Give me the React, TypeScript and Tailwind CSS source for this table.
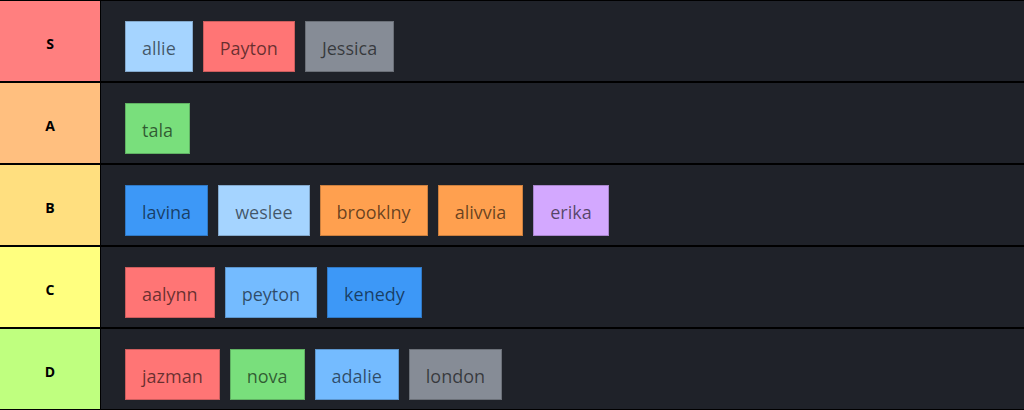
const tiers = [
  {
    label: 'S',
    color: 'bg-[#ff7f7f]',
    items: [
      { name: 'allie', color: 'bg-[#a5d4ff]' },
      { name: 'Payton', color: 'bg-[#ff7575]' },
      { name: 'Jessica', color: 'bg-[#868c96]' },
    ],
  },
  {
    label: 'A',
    color: 'bg-[#ffbf7f]',
    items: [{ name: 'tala', color: 'bg-[#79df7c]' }],
  },
  {
    label: 'B',
    color: 'bg-[#ffdf7f]',
    items: [
      { name: 'lavina', color: 'bg-[#3d98f7]' },
      { name: 'weslee', color: 'bg-[#a5d4ff]' },
      { name: 'brooklny', color: 'bg-[#ffa04f]' },
      { name: 'alivvia', color: 'bg-[#ffa04f]' },
      { name: 'erika', color: 'bg-[#d3a8ff]' },
    ],
  },
  {
    label: 'C',
    color: 'bg-[#ffff7f]',
    items: [
      { name: 'aalynn', color: 'bg-[#ff7575]' },
      { name: 'peyton', color: 'bg-[#74bbff]' },
      { name: 'kenedy', color: 'bg-[#3d98f7]' },
    ],
  },
  {
    label: 'D',
    color: 'bg-[#bfff7f]',
    items: [
      { name: 'jazman', color: 'bg-[#ff7575]' },
      { name: 'nova', color: 'bg-[#79df7c]' },
      { name: 'adalie', color: 'bg-[#74bbff]' },
      { name: 'london', color: 'bg-[#868c96]' },
    ],
  },
];

const App = () => {
  return (
    <div className="w-[1024px] h-[410px] bg-black border-y border-black flex flex-col gap-[2px] font-['Open_Sans',sans-serif] overflow-hidden">
      {tiers.map(tier => (
        <div key={tier.label} className="flex h-[80px]">
          {/* Label */}
          <div className={`${tier.color} w-[101px] shrink-0 flex items-center justify-center pt-[4px] border-r border-black`}>
            <span className="text-[14px] font-bold text-black">{tier.label}</span>
          </div>

          {/* Items */}
          <div className="flex-1 bg-[#1f2229] flex items-start gap-[10px] pl-6 pt-[20px]">
            {tier.items.map(item => (
              <div
                key={item.name}
                className={`${item.color} h-[51px] px-4 flex items-center pt-[4px] text-[18px] text-black/60 border border-black/20`}
              >
                {item.name}
              </div>
            ))}
          </div>
        </div>
      ))}
    </div>
  );
};

export default App;
